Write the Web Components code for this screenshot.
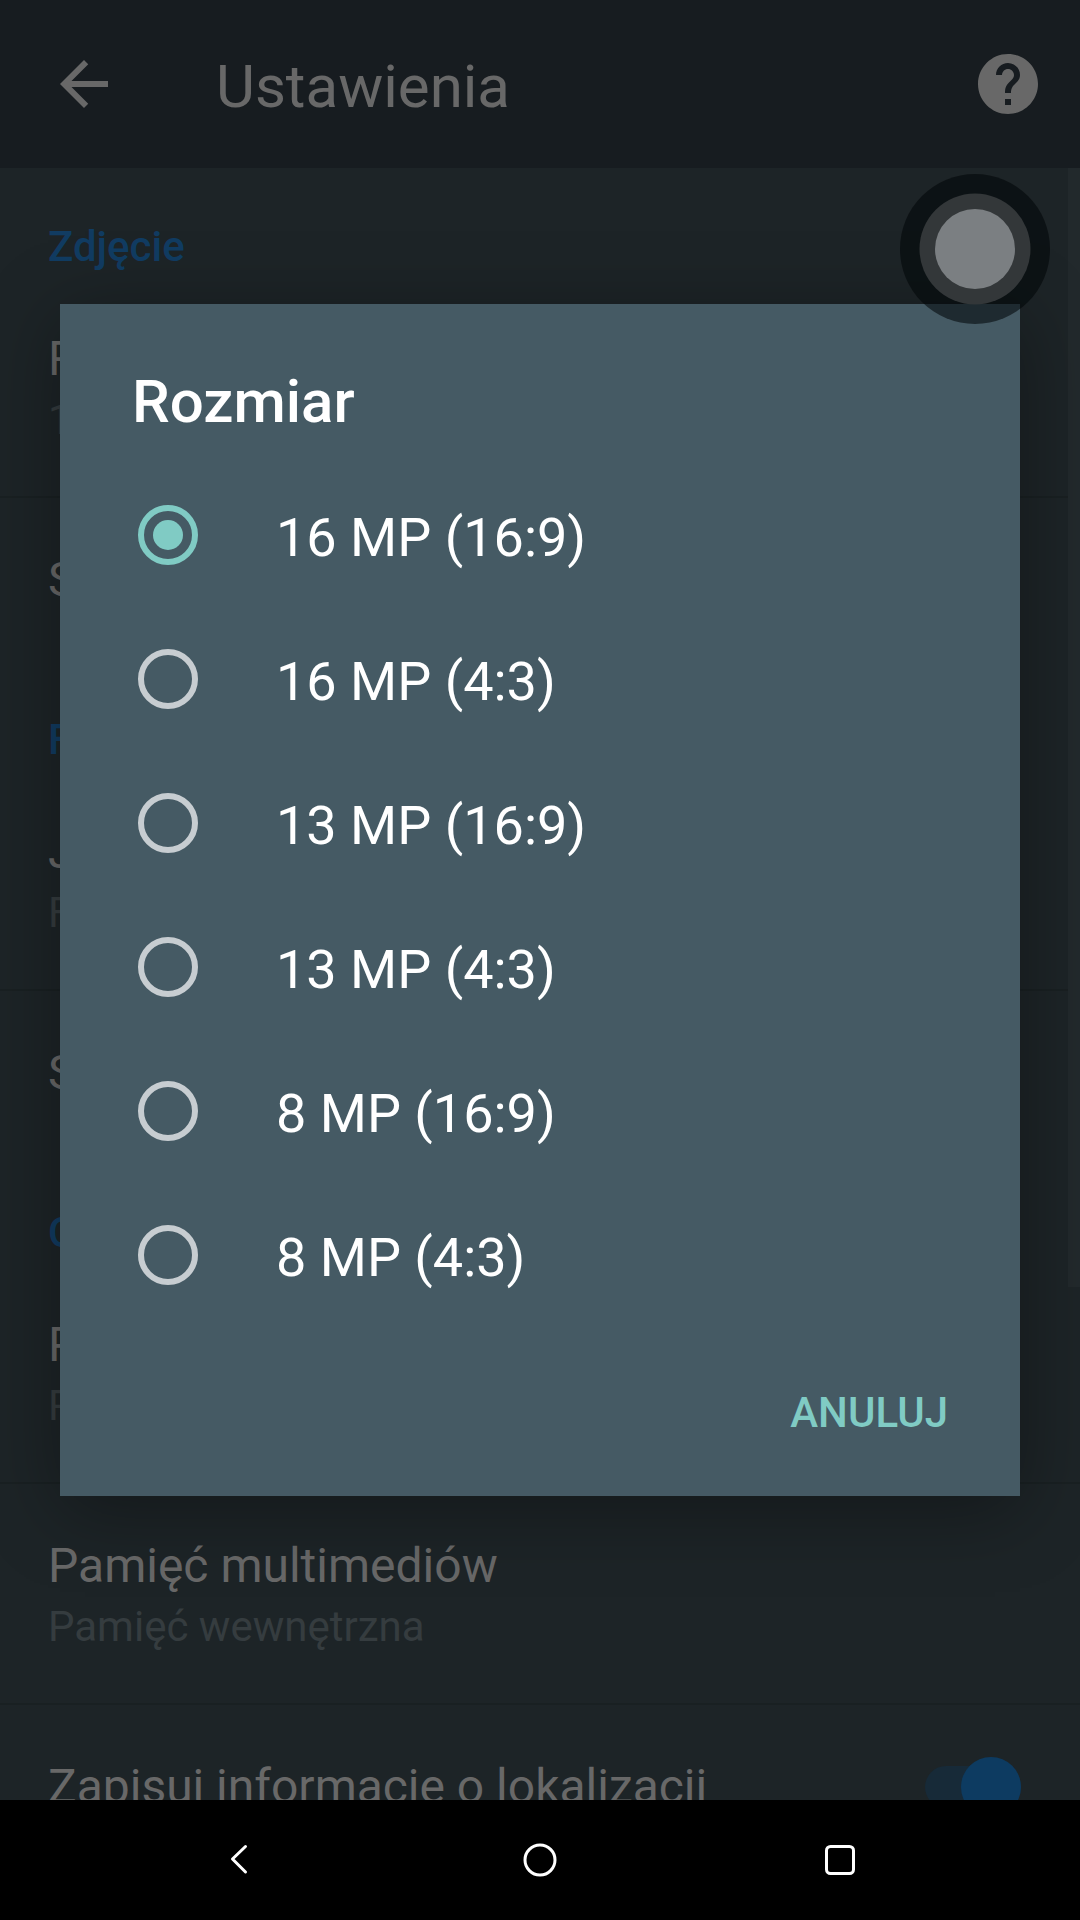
<!DOCTYPE html>
<html lang="pl">
<head>
<meta charset="utf-8">
<meta name="viewport" content="width=device-width, initial-scale=1">
<title>Ustawienia</title>
<style>
  html, body { height: 100%; }
  body { margin: 0; background: #000; font-family: Roboto, "Noto Sans", sans-serif; }
</style>
</head>
<body>
<settings-screen>
  <app-bar slot="bar">Ustawienia</app-bar>

  <settings-heading>Zdjęcie</settings-heading>
  <settings-row>R<span slot="summary">1</span></settings-row>
  <settings-row divided>S</settings-row>

  <settings-heading>F</settings-heading>
  <settings-row>J<span slot="summary">F</span></settings-row>
  <settings-row divided>S</settings-row>

  <settings-heading>O</settings-heading>
  <settings-row>P<span slot="summary">P</span></settings-row>
  <settings-row divided>Pamięć multimediów<span slot="summary">Pamięć wewnętrzna</span></settings-row>
  <settings-row divided toggle>Zapisuj informacje o lokalizacji</settings-row>

  <choice-dialog slot="dialog" heading="Rozmiar" cancel="ANULUJ"
    choices="16 MP (16:9)|16 MP (4:3)|13 MP (16:9)|13 MP (4:3)|8 MP (16:9)|8 MP (4:3)"></choice-dialog>
  <touch-assist slot="dialog"></touch-assist>
  <system-nav slot="nav"></system-nav>
</settings-screen>

<script>
class BaseElement extends HTMLElement {
  connectedCallback() {
    if (this.shadowRoot) return;
    this.attachShadow({ mode: 'open' }).innerHTML = this.render();
  }
}

customElements.define('settings-screen', class extends BaseElement {
  render() {
    return `<style>
      :host { display: flex; flex-direction: column; height: 100vh; }
      .app { position: relative; flex: 1; min-height: 0; display: flex; flex-direction: column; background: #1d2427; }
      .list { flex: 1; min-height: 0; overflow: hidden; }
      .scrollbar { position: absolute; right: 0; top: 168px; width: 12px; height: 1119px; background: #22292c; }
    </style>
    <div class="app">
      <slot name="bar"></slot>
      <main class="list"><slot></slot></main>
      <div class="scrollbar"></div>
      <slot name="dialog"></slot>
    </div>
    <slot name="nav"></slot>`;
  }
});

customElements.define('app-bar', class extends BaseElement {
  render() {
    return `<style>
      :host { display: flex; align-items: center; height: 168px; padding: 0 36px 0 48px; background: #171c20; color: #686868; flex: none; box-sizing: border-box; }
      button { display: block; padding: 0; border: 0; background: none; color: inherit; width: 72px; height: 72px; }
      svg { display: block; width: 72px; height: 72px; fill: currentColor; }
      h1 { flex: 1; margin: 0 0 0 96px; padding-top: 5px; font-size: 60px; line-height: 72px; font-weight: 400; }
    </style>
    <button type="button" aria-label="Wstecz"><svg viewBox="0 0 24 24"><path d="M20 11H7.83l5.59-5.59L12 4l-8 8 8 8 1.41-1.41L7.83 13H20v-2z"/></svg></button>
    <h1><slot></slot></h1>
    <button type="button" aria-label="Pomoc"><svg viewBox="0 0 24 24"><path d="M12 2C6.48 2 2 6.48 2 12s4.48 10 10 10 10-4.48 10-10S17.52 2 12 2zm1 17h-2v-2h2v2zm2.07-7.75l-.9.92C13.45 12.9 13 13.5 13 15h-2v-.5c0-1.1.45-2.1 1.17-2.83l1.24-1.26c.37-.36.59-.86.59-1.41 0-1.1-.9-2-2-2s-2 .9-2 2H8c0-2.21 1.79-4 4-4s4 1.79 4 4c0 .88-.36 1.68-.93 2.25z"/></svg></button>`;
  }
});

customElements.define('settings-heading', class extends BaseElement {
  render() {
    return `<style>
      :host { display: block; padding: 54px 48px 3px; }
      h2 { margin: 0; font-size: 42px; line-height: 50px; font-weight: 500; color: #113c62; }
    </style><h2><slot></slot></h2>`;
  }
});

customElements.define('settings-row', class extends BaseElement {
  render() {
    const summary = this.querySelector('[slot=summary]');
    const toggle = this.hasAttribute('toggle');
    return `<style>
      :host { display: flex; align-items: center; padding: 0 59px 0 48px; border-top: 2px solid transparent; }
      :host([divided]) { border-top-color: #192022; }
      .text { display: flex; flex-direction: column; flex: 1; gap: 8px; padding: 54px 0 ${summary ? 51 : 53}px; }
      .title { font-size: 48px; line-height: 56px; color: #686868; }
      .summary { font-size: 42px; line-height: 50px; color: #353c3f; }
      input { appearance: none; display: flex; align-items: center; flex: none; width: 96px; height: 60px; margin: 0; }
      input::before { content: ""; flex: none; width: 96px; height: 42px; border-radius: 21px; background: #172a38; }
      input::after { content: ""; flex: none; width: 60px; height: 60px; margin-left: -60px; border-radius: 50%; background: #0d3b61; }
    </style>
    <div class="text">
      ${toggle ? '<label class="title" for="switch"><slot></slot></label>' : '<div class="title"><slot></slot></div>'}
      ${summary ? '<div class="summary"><slot name="summary"></slot></div>' : ''}
    </div>
    ${toggle ? '<input id="switch" type="checkbox" role="switch" checked>' : ''}`;
  }
});

customElements.define('choice-dialog', class extends BaseElement {
  render() {
    const options = this.getAttribute('choices').split('|').map((text, i) => `
      <label><input type="radio" name="choice" ${i === 0 ? 'checked' : ''}><span>${text}</span></label>`).join('');
    return `<style>
      :host { position: absolute; inset: 0; display: flex; align-items: center; padding: 0 60px; }
      .panel { flex: 1; background: #455a64; color: #fff; box-shadow: 0 14px 72px rgba(0, 0, 0, .34); }
      h2 { margin: 0; padding: 62px 72px 25px; font-size: 60px; line-height: 72px; font-weight: 500; }
      .options { display: flex; flex-direction: column; }
      label { display: flex; align-items: center; gap: 78px; height: 144px; padding: 0 78px; }
      label span { padding-top: 5px; font-size: 54px; line-height: 64px; }
      input { appearance: none; flex: none; box-sizing: border-box; width: 60px; height: 60px; margin: 0; border: 6px solid #c7cdd1; border-radius: 50%; display: grid; place-items: center; }
      input:checked { border-color: #80cbc4; }
      input:checked::before { content: ""; width: 30px; height: 30px; border-radius: 50%; background: #80cbc4; }
      .actions { display: flex; justify-content: flex-end; padding: 32px 48px 29px; }
      button { height: 108px; padding: 0 24px; border: 0; background: none; color: #80cbc4; font: 500 42px/50px Roboto, sans-serif; }
    </style>
    <section class="panel" role="dialog" aria-labelledby="heading">
      <h2 id="heading">${this.getAttribute('heading')}</h2>
      <div class="options" role="radiogroup" aria-labelledby="heading">${options}</div>
      <div class="actions"><button type="button">${this.getAttribute('cancel')}</button></div>
    </section>`;
  }
});

customElements.define('touch-assist', class extends BaseElement {
  render() {
    return `<style>
      :host { position: absolute; right: 30px; top: 174px; width: 150px; height: 150px; }
      svg { display: block; }
    </style>
    <svg width="150" height="150" viewBox="0 0 150 150" aria-hidden="true">
      <circle cx="75" cy="75" r="75" fill="#000508" fill-opacity=".56"/>
      <circle cx="75" cy="75" r="55.5" fill="#333739"/>
      <circle cx="75" cy="75" r="40" fill="#7b7f82"/>
    </svg>`;
  }
});

customElements.define('system-nav', class extends BaseElement {
  render() {
    return `<style>
      :host { display: grid; grid-template-columns: repeat(3, 1fr); flex: none; height: 120px; padding: 0 90px; background: #000; }
      button { display: grid; place-items: center; padding: 0; border: 0; background: none; }
      svg { display: block; width: 48px; height: 48px; fill: none; stroke: #fff; stroke-width: 3; stroke-linecap: round; stroke-linejoin: round; }
    </style>
    <button type="button" aria-label="Wstecz"><svg viewBox="0 0 48 48"><path d="M29.500 10.500L16.500 23l13 13"/></svg></button>
    <button type="button" aria-label="Ekran główny"><svg viewBox="0 0 48 48"><circle cx="24" cy="24" r="15"/></svg></button>
    <button type="button" aria-label="Ostatnie"><svg viewBox="0 0 48 48"><rect x="10.500" y="10.500" width="27" height="27" rx="4"/></svg></button>`;
  }
});
</script>
</body>
</html>
